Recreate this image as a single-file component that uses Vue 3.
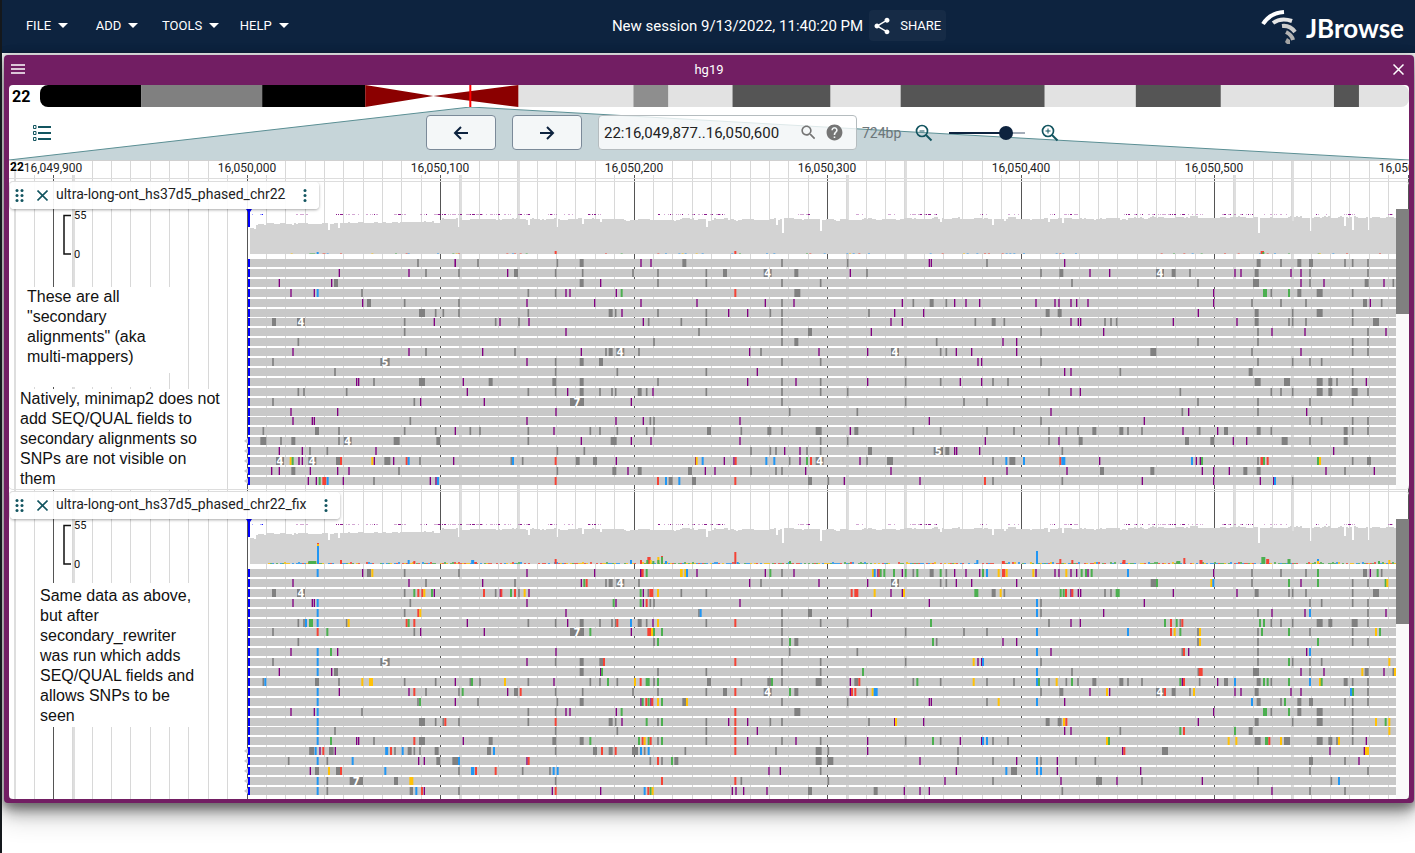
<script setup>
import { ref } from 'vue'

const menus = ['File', 'Add', 'Tools', 'Help']
const locus = ref('22:16,049,877..16,050,600')
const zoom = ref(80)

const ORIGIN = 9
const COLORS = { p: '#800080', g: '#808080', r: '#f44336', b: '#2196f3', n: '#4caf50', y: '#ffc107' }
const WIDTHS = { p: 4, g: 5, r: 6, b: 6, n: 6, y: 6 }
const BLOCK_STARTS = [0, 440, 900]

/* Chromosome bands as [start, end, fill] */
const bands = [
  [0, 101, '#000'], [101, 222, '#808080'], [222, 325, '#000'],
  [478, 593, '#e2e2e2'], [593, 628, '#8e8e8e'], [628, 692, '#e2e2e2'],
  [692, 790, '#555'], [790, 860, '#e2e2e2'], [860, 1004, '#555'],
  [1004, 1095, '#e2e2e2'], [1095, 1180, '#555'], [1180, 1293, '#e2e2e2'],
  [1293, 1318, '#555'], [1318, 1368, '#e2e2e2'],
]

const ticks = Array.from({ length: 8 }, (_, i) => ({
  x: Math.floor(53.5 + i * 193.5) - ORIGIN,
  label: (16049900 + i * 100).toLocaleString('en-US'),
}))
const minor = Array.from({ length: 73 }, (_, i) => Math.floor(14.8 + i * 19.35) - ORIGIN)
const wide = [14, 73, 460, 518, 847, 905, 1234, 1292].map((x) => x - ORIGIN)

/* Tokens: colour letter + centre, optional w(idth), h(eight) and t(ext), in thirds of a pixel per block */
function parse(line) {
  const out = []
  line.split('|').forEach((block, i) => {
    for (const m of block.matchAll(/([pgrbny])(\d+)(?:w(\d+))?(?:h(\d+))?(?:t(\d))?/g)) {
      const w = Number(m[3] || WIDTHS[m[1]]) / 3
      const c = Number(m[2]) / 3 + BLOCK_STARTS[i] - ORIGIN
      out.push({ x: c - w / 2, c, w, h: Number(m[4] || 1), fill: COLORS[m[1]], text: m[5] })
    }
  })
  return out
}

const rowsA = [
  'g1254 p1366|p46 g114 g352 g425w12 p603 p633 g733w12 g1026 g1223|p88 p94 g261 p494 g1076w12 g1143 g1198w12 g1233w12 g1335 g1358 g1404',
  'p1018 p1227 g1278|g57 p203 g228w12 g347 g428 g579 g654 g799 g855w12 g983w24t4 g1069w12 p1231 g1281|g423 g484w12 p570 p629 g780w24t4 g821w12 g870 p1005 p1023 g1070w12 p1173 p1203 g1230 g1404',
  'p838 p995 g1008w12|g425w12 p482 g654 g799 g1026 g1142|g516 g894 g1068w18 p1203 g1230 p1272 g1400w12 p1452 g1480',
  'p873 p943 b953 g1086|g265 g347 p378 p390 p529 n545 r886 g1072w18|p941 n1095w12 g1114 n1167 g1198w12 g1259w18 g1358',
  'p1088 g1107w12 g1214|g57 p261 p464 p603 p771 p976 g1026 p1062|p7 g40 g95w12 g139 p164 p198 p239 p408 p465 p477 p513 p530 p564 p941 g1056 g1143 g1218 g1395w12 p1411 g1445',
  'g1266w18 g1307|g10 g57 g265 g512w12 g527 p546 g654 g799 p866 p923 g991 g1026 g1287 p1364|p71 g443w12 g479w12 p895 g1070w12 g1178 g1259w18 g1358',
  'g822w12 g903w24t4 g1214 p1303|g167 p180 g237 p267 p610 g626 g724 g799 g1026 p1353|p7 g226 g281w12 g313 p513 p535 p542 g615 g633 g650 p820 p1011 g1070w12 g1167 g1178 g1218 g1358 g1428w18',
  'g1214|p378 g777 g1026 g1110w12 p1294|g423 p611 g1074 p1116 p1215 g1404 p1458',
  'g895|g642 g1026 g1069w12|g110 p309 p350 g894 g1074 g1358 g1404',
  'p879 p1227 g1278|p128 g225 p424 g498 g512w12 g541w24t4 g597 p929 g963 p1137 p1283 g1365w24t4|g122 g139 p169 p215 p350 g760w18 g1056 p1203 g1358 g1404',
  'g819 g1155w28t5|p261 g347 g425w12 g483w12 g1026 g1142|g17 p234 p245 g423 g1074 g1178 g1230 g1265',
  'g1005|g347 g532 g799 p952|p494 p513 g661 g1052w12 g1358',
  'p1070 p1076 g1122 g1266w18|p70 g152w12 g343w12 g425w12 g654 p923 g1026 p1068 g1142 p1283|g17 g122 p181 p245 g279 g324 g1073w18 g1161w18 g1259w18 g1291w12 g1311 g1358 p1399',
  'g895 g912 g1040|p82 g265 g347 p383 g425w12 g480 g516 g527 g599w12 g620 p639 g799 g1026 g1142 g1223|g447 p513 p541 g841 g1114 g1143 g1178 g1259w18 g1291w12 g1364w18 g1404',
  'g819 g1243 p1262|p133 g411w42t7 p574 g1026|g17 g192 g261 g894 g1074 g1230 g1358',
  'p873 p1013|p348 g1049 g1252|p453 g847 p866 g1074 p1220',
  'p879 p937 p943 g1231|p261 p528 p610 g631 g642 p900|p88 g423 p733 g1230 g1265 g1358 g1404',
  'g790 g951w12 g1017 g1214 g1307|p46 g91 g120 p342 g265 g451 g480 g532 g620 g642 g807w12 g904 g988w12 g1026 g1136w18 p1231 g1249w12|g40 g122 g261 g342 g447 g499 g534 g583w12 g664w12 g684 g726 p849 g899 p953 g978w12 g1076w12 g1114 g1337w12 g1358 g1404',
  'g790w18 g843 g880w12 g1017 g1043w24t4 g1190w18 g1315w12|g265 p424 g521w18 p574 p633 p900 g1142 g1223|p256 g447 p477 g542w12 g861w12 g937w12 p1000 p1040 g1154w18 g1230 g1337w12',
  'p838 p907 g930 g982 p1128|g352 g433 g933 g991 g1008 p1034 p1080 g1101 g1142 g1290w12|g115w28t5 g142w12 p164 p170 p239 g487 p1301',
  'g840w24t4 y872 n878 p897 p907 g937w24t4 g1014w12 r1023 y1117 p1123 g1162w18 p1181 r1220 b1226 g1260|p41 g214 b219 g248 r347 g413w12 g465w12 p529 p767 y770 b788 p853 p882 r887 b979 b1003 g1049 p1080 n1101 r1113 g1139w24t4 p1260 g1281 g1350w18|g279 b319 g337w18 b372 r481 b490w12 p599 b876 p889 p901 n906 g1074 r1086w9 n1092 r1103 n1254 y1260 g1358 g1407w12',
  'p815 p838 g880w12 p931 p1013 p1047 g1197|g352 g523w12 p564 g599w12 g750w12 p796 p825 g933 g1008 g1026 p1097 p1353|p321 p501 g606w12 g757w12 p907 p941 p988 g1036w12 g1076w12 p1278 g1335 p1423',
  'p925 p949 n959 r973w12 b983 p1030 g1122 p1291 p1308 b1314|r347 r654 b678 g692w12 b718 g762w12 r886 g1110w12 g1165 p1213|p60 r255 g279 g487 p727 p941 p1081 p1121 b1125 g1178',
]

const rowsB = [
  'b953 p1088 g1107w12 y1117 g1214|g57 p261 p464 r606w10 p602 n620 y724w8 y736 b741 p771 p976 n991 g1026 p1062 y1299 b1304 p1314 r1318 n1322 n1333 n1362|p7 n17 g40 n52 g95w12 n122 g139 p164 p198 p239 n249 b261 y296 r311w10 y320 y400 p408 p465 p477 y499 p513 p530 n545 n558 p564 n575 b684 p941 g1056 g1143 g1218 n1254 g1395w12 p1411 n1433 g1445',
  'p879 p1227 g1278|p128 g225 p424 n433 r440 g498 g512w12 g541w24t4 g597 p929 g963 p1137 p1283 g1365w24t4|g122 g139 p169 p215 p350 g762w20 n771 y934 b940 g1056 n1167 p1203 n1254 g1358 g1404 n1457 y1462',
  'g822w12 g903w24t4 g1214 n1243 r1255 r1267 y1273 n1296 p1303|r132 g167 p181 r184 n213 r225 g237 y254 p267 n602 p610 g625 r634w12 y654 g724 g799 g1026 r1235 r1249w12 y1304 p1353|p7 y12 n229w12 g281w12 y302 g313 n482 n491 r498 p513 r517 p535 p542 g615 g633 n653w12 p820 p1011 g1070w12 g1167 g1178 g1218 g1358 g1428w18',
  'p879 p937 p943 b953 g1231|p261 n521 p528 n602 p610 r620 g631 g642 p900|p88 b411 g423 p733 g1230 g1265 g1358 g1404',
  'b953 g1214 r1255 y1261|p378 g777 b782 g1026 g1110w12 p1294|b411 g423 p611 g1074 p1116 p1215 b1230 g1404 p1458',
  'g895 g912 b918 n933w12 b953 g1040 y1046 r1220 n1226 r1243|p82 g265 g347 p383 g425w12 g480 g516 g527 r532 b573 g599w12 g620 p639 y654 g799 r886 g1026 g1142 g1223|n93 g447 p513 p541 n795 r813 n830 g841 r847 n1080 n1092 g1114 g1143 g1178 g1259w18 g1291w12 g1364w18 g1404',
  'g819 r953 n982 g1243 p1262|p133 g411w42t7 n451 p574 r628w12 y636 n642 n666 g1026|g17 g192 g261 b411 b684 r813 y824 n841 g894 y900 g1074 n1086 n1167 g1230 g1358 y1428 n1440',
  'g895|g642 n654 g1026 n1050 g1069w12|n99 g110 p309 p350 g894 y900 g1074 n1254 g1358 g1404',
  'p873 b953 n993 p1013|p348 g1049 g1252|b411 p453 g847 r852 p866 g1074 p1220 b1230',
  'g819 b953 g1155w28t5|p261 g347 g425w12 g484w12 r492 r886 g1026 g1142|g17 y221 p234 p245 b249 g423 g1074 n1167 g1178 g1230 g1265 y1468',
  'p838 b953 p995 g1008w12|g425w12 p482 n486 g654 g799 g1026 g1142 n1269|b411 g516 g895 r902w12 g1068w18 p1203 g1230 p1272 y1387 g1400w12 p1452 g1480 y1485',
  'g790 b796 g951w12 g1017 y1087 y1113w12 g1214 g1307|p46 g91 n96 g120 y195 g265 p342 g451 g480 n504 g532 y585 r602 n623w12 g642 n654 g807w12 g904 g988w12 n996 g1026 g1136w18 p1231 g1249w12 r1258|g40 n52 g122 y221 g261 g342 b411 n417 g447 y470 g499 n516 g534 g583w12 g664w12 g684 g726 n841 p847 r852 g899 p953 g978w12 b1005 g1076w12 n1092 n1103 g1114 n1167 b1230 y1260 n1265 g1337w12 g1358 g1404',
  'b953 p1018 p1227 r1243 g1278|g57 n68 p203 g228w12 r242 g347 g428 g579 g654 g799 g855w12 r886 g983w24t4 n1050 g1069w12 p1231 r1236 r1246 g1281 y1298 b1307w12|g423 g484w12 p570 y621 p629 g780w24t4 r795 g821w12 g870 y882 p1005 p1023 g1070w12 p1173 p1203 b1353 n1359 g1404',
  'b953 g1254 n1260|p46 g114 g352 g425w12 p603 n608 r619 n626 p633 r637 y654 n666 g733w12 y741 g1026 g1223|p88 p94 g261 y296 b411 p494 b1056 g1076w12 g1143 n1155 g1198w12 g1233w12 g1335 g1358 g1404',
  'p873 p943 b953 g1086|g265 g347 p378 p390 p529 n545 r886 g1072w18|p941 n1095w12 g1114 n1167 g1198w12 g1259w18 g1358',
  'b953 g1266w18 g1307|g10 r16 g57 g265 r347 g512w12 g527 p546 n620 g654 n666 g799 p866 r886 p923 g991 g1026 g1287 p1364 y1368|p71 g443w12 g479w12 y492 r499 p895 g1070w12 g1178 g1259w18 g1358 y1428 n1457 y1468',
  'b953 g1005|g347 g532 g799 r886 p952|p494 p513 g661 n841 r852 n1005 g1052w12 g1358 y1468',
  'b953 n993 p1070 p1076 g1122 r1243 g1266w18|p70 g152w12 g343w12 g425w12 n451 n597 r608 y614 n626 r632 g654 n666 g799 r886 p923 g1026 p1068 g1142 p1283|g17 n99 g122 p181 p245 b249 b261 g279 g324 y621 n627 y986 y1009 g1073w18 n1100w10 r1108 y1143 g1161w18 g1259w18 g1291w12 g1311 y1317 g1358 p1399',
  'g935w15 b947 p960 r970 g994w14 p1006 b1160w9 r1173 g1185 b1208 g1229w12 g1243 g1260 g1310w12|g147w12 b162 g347 g465w12 r486 g512w12 r527 g585w18 b603 g614 b626 g736 r886 g1008 g1136w18 g1165 p1283|g174 p668 r673 g795w18 p1290 p1393 y1401w12',
  'g866 b953 g982 b1058 p1256 p1273 g1315w12|g46w18 b57 p261 r266 g631 r654 g666 n696 g709w12 g1136w18 g1171w18|p60 g174 g279 p350 b411 g423 p472 g528 g586 g1233w12 g1335 p1377',
  'p931 g951w12 y987 g1014w12 r1023 b1156|g57 b98w10 r108 r167 g248 g330 b341 b353 p987 p1021 g1142|p169 b319 g342w18 b411 b423 p472 p722 g1074 g1230 g1404',
  'b953 g982 g1069w40t7 g1188w12 y1234w12|g347 r666 r886 g904 g1165|p135 g279 p483 g597w18 p651 g726 p907 g1074 g1294 b1317',
  'b953 g982 g1234w10 b1249 r1266 p1273|g57 p337 r347 p482 b614 r625 n632 y638 p877 p888 p911 p981 g1110w12 g1307w12|p13 p60 p88 g487 p1116 g1230 g1335',
]

const snpsA =
  'y875 n937w18 b953h2 r972w9 b983 r1023 y1117 n1188 r1220 b1226 b1314|n40 y50 r57 r202 b219 r225 r242 n260 r347h3 r498 n545 r655 b678 b718 y728 b737 y770 b788 b877 r886h3 n900 b981 b1003 n1101 r1111 b1154 b1222 y1230 b1241 r1258 b1287|b92 r128 y192 b203 b232 r255 r267 r308 b320 b331 b343 b372 b470 r481 b490 b528 r785 n822 r853 b878 n905 r975 r1016 b1080 r1087w10h3 n1090h2 r1103 b1125 n1167 n1256 y1260 b1300 r1341 r1440'
const snpsB =
  'n937w24h3 r954w6h21 y954w6h20 b954w6h18 r1023h4 b1226h4 r1243h3|b98w9h4 r108h2 r347h5 b573h4 r603h4 r627w10h7 n622h4 y632h4 n640h3 y655h7 n655h4 r666h8 n666h7 b678h3 r886h12 b893h2 n1050h3|b232h4 r310w9h3 b411h13 r481h5 r517h4 r672w9h4 n835w12h3 r853h6 r903w9h4 n1090w12h7 r1103w9h5 n1167w9h5 b1254h5 y1254h3 n1437h3 y1468h4'

function hash(n) {
  const v = Math.sin(n * 12.9898) * 43758.5453
  return v - Math.floor(v)
}

const dips = [
  [328, 8], [338, 6], [459, 9], [528, 7], [556, 9], [582, 6], [600, 4], [707, 9], [776, 7], [782, 15], [821, 13],
  [941, 5], [993, 8], [1004, 4], [1049, 5], [1062, 6], [1258, 17], [1293, 5], [1310, 15], [1345, 10], [1353, 14], [1368, 14],
]
function depthTop(x) {
  if (x < 256) return 44
  if (x < 360) return 40
  if (x < 440) return 39
  if (x < 900) return 36
  return x < 1150 ? 35 : 34
}
const coverage = (() => {
  let d = 'M241 72'
  for (let x = 250; x < 1396; x += 2) {
    let y = depthTop(x) + Math.round(hash(Math.floor(x / 7)) * 2 + hash(x) * 0.8)
    const dip = dips.find((p) => x === p[0] || x === p[0] - 1)
    if (dip) y = depthTop(x) + dip[1]
    d += `V${y}H${x + 2 - ORIGIN}`
  }
  return d + 'V72Z'
})()

const dashes = []
for (let x = 252; x < 1394; x += 2) {
  const dense = hash(Math.floor(x / 14) + 5) > 0.35
  if (dense && hash(x + 3) > 0.4) {
    dashes.push({ x: x - ORIGIN, w: hash(x + 9) > 0.6 ? 2 : 1, o: hash(x + 1) > 0.7 ? 0.9 : 0.35, fill: x < 265 ? '#00f' : '#800080' })
  }
}

const noise = []
for (let x = 266; x < 1396; x += 2) {
  if (hash(x * 3) > 0.25) {
    const h = hash(x + 77) > 0.8 ? 2 : 1
    noise.push({ x: x - ORIGIN, w: 2, h, fill: [COLORS.r, COLORS.b, COLORS.n, COLORS.y][Math.floor(hash(x * 7) * 4)] })
  }
}

const makeRows = (lines) => lines.map((line, i) => ({ y: 77 + Math.round(i * 9.9), marks: parse(line), clipped: i > 17 }))

const tracks = [
  { name: 'ultra-long-ont_hs37d5_phased_chr22', rows: makeRows(rowsA), snps: parse(snpsA), noise: [] },
  { name: 'ultra-long-ont_hs37d5_phased_chr22_fix', rows: makeRows(rowsB), snps: parse(snpsB), noise },
]
</script>

<template>
  <div class="app">
    <header class="topbar">
      <nav class="menus">
        <button v-for="m in menus" :key="m" class="menu">
          {{ m }}
          <svg width="10" height="5" viewBox="0 0 10 5"><path d="M0 0h10L5 5z" fill="#fff" /></svg>
        </button>
      </nav>
      <div class="session">
        <span class="session-name">New session 9/13/2022, 11:40:20 PM</span>
        <button class="share">
          <svg width="20" height="20" viewBox="0 0 24 24"><path fill="#fff" d="M18 16.08c-.76 0-1.44.3-1.96.77L8.91 12.7c.05-.23.09-.46.09-.7s-.04-.47-.09-.7l7.05-4.11c.54.5 1.25.81 2.04.81 1.66 0 3-1.34 3-3s-1.34-3-3-3-3 1.34-3 3c0 .24.04.47.09.7L8.04 9.81C7.5 9.31 6.79 9 6 9c-1.66 0-3 1.34-3 3s1.34 3 3 3c.79 0 1.5-.31 2.04-.81l7.12 4.16c-.05.21-.08.43-.08.65 0 1.61 1.31 2.92 2.92 2.92s2.92-1.31 2.92-2.92-1.31-2.92-2.92-2.92z" /></svg>
          Share
        </button>
      </div>
      <div class="brand">
        <svg width="36" height="38" viewBox="0 0 36 38" fill="none">
          <path d="M2 17Q9 6 23 5" stroke="#fff" stroke-width="4" />
          <path d="M12 16Q20 10 31 14" stroke="#e6e6e6" stroke-width="4" />
          <path d="M21 19Q29 18 34 25" stroke="#ccc" stroke-width="4" />
          <path d="M25 25Q31 28 32 33" stroke="#b3b3b3" stroke-width="4" />
          <path d="M26 31l3 2 0 4h-3l-2-2z" fill="#a3a3a3" />
        </svg>
        <span class="brand-name">JBrowse</span>
      </div>
    </header>

    <main class="workspace">
      <section class="view">
        <div class="titlebar">
          <button class="icon-btn" aria-label="View menu">
            <svg width="14" height="12" viewBox="0 0 14 12"><path d="M0 2h14M0 6h14M0 10h14" stroke="#fff" stroke-width="1.4" /></svg>
          </button>
          <h1>hg19</h1>
          <button class="icon-btn" aria-label="Close view">
            <svg width="11" height="11" viewBox="0 0 11 11"><path d="M.5.5l10 10M10.5.5l-10 10" stroke="#fff" stroke-width="1.5" /></svg>
          </button>
        </div>

        <div class="body">
          <div class="overview">
            <strong>22</strong>
            <svg class="ideogram" viewBox="0 0 1368 22" preserveAspectRatio="none">
              <rect v-for="b in bands" :key="b[0]" :x="b[0]" y="0" :width="b[1] - b[0]" height="22" :fill="b[2]" />
              <path d="M325 0L393 11L325 22zM478 0L393 11L478 22z" fill="#8b0000" />
              <rect x="429" y="0" width="2" height="22" fill="red" />
            </svg>
          </div>

          <div class="controls">
            <svg class="zoom-area" viewBox="0 0 1399 53" preserveAspectRatio="none">
              <path d="M0 53L461 0L1399 53z" fill="#c6d5d9" />
              <path d="M0 53L461 0L1399 53" fill="none" stroke="#5b8f94" vector-effect="non-scaling-stroke" />
            </svg>
            <button class="icon-btn selector" aria-label="Open track selector">
              <svg width="18" height="16" viewBox="0 0 18 16" fill="none" stroke="#135560">
                <path d="M5 2h13M5 8h13M5 14h13" stroke-width="2" />
                <path d="M.5.5h2.500v3H.5zM.5 6.500h2.500v3H.5zM.5 12.500h2.500v3H.5z" />
              </svg>
            </button>
            <button class="pan" aria-label="Pan left">
              <svg width="16" height="14" viewBox="0 0 16 14" fill="none" stroke="#0d233f" stroke-width="2"><path d="M15 7H2M8 1L2 7l6 6" /></svg>
            </button>
            <button class="pan" aria-label="Pan right">
              <svg width="16" height="14" viewBox="0 0 16 14" fill="none" stroke="#0d233f" stroke-width="2"><path d="M1 7h13M8 1l6 6-6 6" /></svg>
            </button>
            <div class="search">
              <input v-model="locus" type="text" aria-label="Location" />
              <svg width="19" height="19" viewBox="0 0 24 24"><path fill="#757575" d="M15.500 14h-.79l-.28-.27C15.410 12.590 16 11.110 16 9.500 16 5.910 13.090 3 9.500 3S3 5.910 3 9.500 5.910 16 9.500 16c1.610 0 3.090-.59 4.230-1.570l.27.28v.79l5 4.990L20.490 19l-4.990-5zm-6 0C7.010 14 5 11.990 5 9.500S7.010 5 9.500 5 14 7.010 14 9.500 11.990 14 9.500 14z" /></svg>
              <button class="icon-btn" aria-label="Help">
                <svg width="19" height="19" viewBox="0 0 24 24"><path fill="#757575" d="M12 2C6.480 2 2 6.480 2 12s4.480 10 10 10 10-4.480 10-10S17.520 2 12 2zm1 17h-2v-2h2v2zm2.070-7.750l-.9.92C13.450 12.900 13 13.500 13 15h-2v-.5c0-1.100.45-2.100 1.170-2.830l1.240-1.260c.37-.36.59-.86.59-1.410 0-1.100-.9-2-2-2s-2 .9-2 2H8c0-2.210 1.790-4 4-4s4 1.790 4 4c0 .88-.36 1.680-.93 2.250z" /></svg>
              </button>
            </div>
            <span class="span-size">724bp</span>
            <button class="icon-btn" aria-label="Zoom out">
              <svg width="18" height="18" viewBox="0 0 18 18" fill="none" stroke="#135560"><circle cx="7" cy="7" r="5.500" stroke-width="1.700" /><path d="M11 11l5.500 5.500" stroke-width="2" /><path d="M4.500 7h5" /></svg>
            </button>
            <input v-model="zoom" class="slider" type="range" min="0" max="100" aria-label="Zoom level" :style="{ '--fill': zoom + '%' }" />
            <button class="icon-btn" aria-label="Zoom in">
              <svg width="18" height="18" viewBox="0 0 18 18" fill="none" stroke="#135560"><circle cx="7" cy="7" r="5.500" stroke-width="1.700" /><path d="M11 11l5.500 5.500" stroke-width="2" /><path d="M4.500 7h5M7 4.500v5" /></svg>
            </button>
          </div>

          <div class="plot">
            <svg class="grid" width="100%" height="100%">
              <rect v-for="x in minor" :key="x" :x="x" y="0" width="1" height="100%" fill="#d8d8d8" />
              <rect v-for="x in wide" :key="'w' + x" :x="x" y="0" width="2" height="100%" fill="#dedede" />
              <rect v-for="t in ticks" :key="t.x" :x="t.x" y="0" width="1" height="100%" fill="#555" />
            </svg>

            <div class="ruler">
              <strong>22</strong>
              <span v-for="t in ticks" :key="t.x" :style="{ left: t.x + 'px' }">{{ t.label }}</span>
            </div>

            <article v-for="t in tracks" :key="t.name" class="track">
              <div class="track-label">
                <button class="icon-btn" aria-label="Move track">
                  <svg width="9" height="13" viewBox="0 0 9 13" fill="#135560"><circle v-for="i in 6" :key="i" :cx="i % 2 ? 2 : 7" :cy="1.500 + 5 * Math.floor((i - 1) / 2)" r="1.500" /></svg>
                </button>
                <button class="icon-btn" aria-label="Close track">
                  <svg width="11" height="11" viewBox="0 0 11 11"><path d="M.5.5l10 10M10.500.5l-10 10" stroke="#135560" stroke-width="1.600" /></svg>
                </button>
                <span>{{ t.name }}</span>
                <button class="icon-btn" aria-label="Track menu">
                  <svg width="4" height="13" viewBox="0 0 4 13" fill="#135560"><circle cx="2" cy="1.500" r="1.500" /><circle cx="2" cy="6.500" r="1.500" /><circle cx="2" cy="11.500" r="1.500" /></svg>
                </button>
              </div>
              <svg class="pileup" width="100%" height="307">
                <path d="M62 33.500h-7v38.500h7" fill="none" stroke="#111" stroke-width="1.500" />
                <text class="axis" x="65" y="37">55</text>
                <text class="axis" x="65" y="76">0</text>
                <rect v-for="(d, i) in dashes" :key="'d' + i" :x="d.x" y="32" :width="d.w" height="1" :fill="d.fill" :fill-opacity="d.o" />
                <path :d="coverage" fill="#d3d3d3" />
                <rect v-for="(s, i) in t.noise" :key="'n' + i" :x="s.x" :y="72 - s.h" :width="s.w" :height="s.h" :fill="s.fill" fill-opacity=".8" />
                <rect v-for="(s, i) in t.snps" :key="'s' + i" :x="s.x" :y="72 - s.h" :width="s.w" :height="s.h" :fill="s.fill" :fill-opacity="s.h === 1 ? 0.5 : 1" />
                <path d="M237 27h6l-2 3v15h-2V30z" fill="#00f" />
                <g v-for="r in t.rows" :key="r.y">
                  <path v-if="r.clipped" :d="`M239 ${r.y + 1}l-4 3l4 3z`" fill="#c8c8c8" />
                  <rect x="240" :y="r.y" width="1147" height="8" fill="#c8c8c8" />
                  <rect x="239" :y="r.y" width="2" height="8" fill="#00f" />
                  <template v-for="(m, i) in r.marks" :key="i">
                    <rect :x="m.x" :y="r.y" :width="m.w" height="8" :fill="m.fill" />
                    <text v-if="m.text" class="len" :x="m.c" :y="r.y + 8">{{ m.text }}</text>
                  </template>
                </g>
              </svg>
              <div class="scrollbar"><i></i></div>
            </article>

            <p class="note note-a">These are all<br />"secondary<br />alignments" (aka<br />multi-mappers)</p>
            <p class="note note-b">Natively, minimap2 does not<br />add SEQ/QUAL fields to<br />secondary alignments so<br />SNPs are not visible on<br />them</p>
            <p class="note note-c">Same data as above,<br />but after<br />secondary_rewriter<br />was run which adds<br />SEQ/QUAL fields and<br />allows SNPs to be<br />seen</p>
          </div>
        </div>
      </section>
    </main>
  </div>
</template>

<style>
body {
  margin: 0;
  background: #fff;
}
</style>

<style scoped>
.app {
  min-height: 100vh;
  box-sizing: border-box;
  border-left: 2px solid #14181c;
  font-family: Roboto, "Liberation Sans", sans-serif;
  color: #222;
  overflow: hidden;
}
button {
  font: inherit;
  color: inherit;
  border: 0;
  background: none;
  padding: 0;
  cursor: pointer;
}
svg {
  display: block;
  flex: none;
}
.icon-btn {
  display: flex;
}
.topbar {
  display: flex;
  align-items: center;
  justify-content: space-between;
  height: 53px;
  box-sizing: border-box;
  padding: 0 11px 2px 12px;
  background: #0d233f;
  color: #fff;
}
.menus {
  display: flex;
  gap: 4px;
}
.menu {
  display: flex;
  align-items: center;
  justify-content: center;
  gap: 7px;
  min-width: 66px;
  padding: 0 8px;
  font-size: 12px;
  text-transform: uppercase;
}
.session {
  display: flex;
  align-items: center;
  gap: 6px;
}
.session-name {
  font-size: 15px;
}
.share {
  display: flex;
  align-items: center;
  gap: 8px;
  height: 31px;
  padding: 0 5px 0 3px;
  border-radius: 4px;
  background: #162b46;
  font-size: 13px;
  text-transform: uppercase;
}
.menu {
  font-size: 13px;
}
.brand {
  display: flex;
  align-items: center;
  gap: 9px;
}
.brand-name {
  padding-top: 4px;
  font: 700 26px/36px Lato, sans-serif;
}
.workspace {
  padding: 2px 1px 50px 2px;
  background: #fff;
}
.view {
  background: #721e63;
  border-radius: 4px;
  padding: 0 5px 4px;
  box-shadow: 0 12px 14px -2px rgba(0, 0, 0, 0.28), 0 14px 26px 2px rgba(0, 0, 0, 0.16), 0 2px 8px 3px rgba(0, 0, 0, 0.32);
}
.titlebar {
  display: flex;
  align-items: center;
  justify-content: space-between;
  height: 30px;
  box-sizing: border-box;
  padding: 0 5px 2px 2px;
  color: #fff;
}
.titlebar h1 {
  margin: 0;
  font-size: 13px;
  font-weight: 400;
}
.body {
  background: #fff;
  border-radius: 4px;
  overflow: hidden;
}
.overview {
  display: flex;
  align-items: center;
  height: 22px;
}
.overview strong {
  width: 28px;
  padding-left: 3px;
  font-size: 16px;
  font-weight: 700;
  color: #000;
}
.ideogram {
  flex: 1;
  min-width: 0;
  height: 22px;
  border-radius: 8px;
}
.controls {
  position: relative;
  display: flex;
  align-items: center;
  height: 53px;
  box-sizing: border-box;
  padding-bottom: 2px;
}
.controls > * {
  position: relative;
}
.controls > .zoom-area {
  position: absolute;
  inset: 0;
  width: 100%;
  height: 53px;
}
.selector {
  margin: 0 375px 0 24px;
}
.pan {
  display: flex;
  align-items: center;
  justify-content: center;
  width: 70px;
  height: 35px;
  margin-right: 16px;
  border: 1px solid #7b8a99;
  border-radius: 4px;
  background: rgba(255, 255, 255, 0.8);
}
.search {
  display: flex;
  align-items: center;
  gap: 7px;
  width: 259px;
  height: 35px;
  box-sizing: border-box;
  padding: 0 12px 0 5px;
  border: 1px solid #b5bcbf;
  border-radius: 4px;
  background: rgba(255, 255, 255, 0.8);
}
.search input {
  flex: 1;
  min-width: 0;
  padding: 0;
  border: 0;
  outline: 0;
  background: none;
  font: 15px Roboto, sans-serif;
  color: #222;
}
.span-size {
  margin: 0 14px 0 5px;
  font-size: 14px;
  color: #6d7679;
}
.slider {
  appearance: none;
  width: 76px;
  height: 14px;
  margin: 0 16px;
  background: linear-gradient(90deg, #0d233f var(--fill), #a4adb9 var(--fill)) center / 100% 2px no-repeat;
}
.slider::-webkit-slider-thumb {
  appearance: none;
  width: 14px;
  height: 14px;
  border-radius: 50%;
  background: #0d233f;
}
.plot {
  position: relative;
  height: 639px;
  overflow: hidden;
  border-top: 1px solid #d0d0d0;
  box-sizing: border-box;
}
.grid {
  position: absolute;
  inset: 0;
}
.ruler {
  position: relative;
  height: 17px;
  border-bottom: 1px solid #ddd;
  margin-bottom: 3px;
  font-size: 12px;
  line-height: 14px;
}
.ruler strong {
  position: absolute;
  left: 1px;
  z-index: 1;
  line-height: 12px;
  color: #000;
}
.ruler span {
  position: absolute;
  transform: translateX(-50%);
  background: #fff;
}
.track {
  position: relative;
  height: 307px;
  margin-bottom: 3px;
  border-radius: 4px;
  box-shadow: 0 0 0 1px #ddd;
  overflow: hidden;
}
.track-label {
  position: absolute;
  z-index: 1;
  left: 1px;
  top: 0;
  display: flex;
  align-items: center;
  height: 27px;
  padding: 0 12px 0 5px;
  border-radius: 4px;
  background: rgba(255, 255, 255, 0.92);
  box-shadow: 0 1px 3px rgba(0, 0, 0, 0.35);
  font-size: 14px;
}
.track-label span {
  margin: 0 18px 3px 8px;
}
.track-label .icon-btn + .icon-btn {
  margin-left: 13px;
}
.pileup {
  position: relative;
}
.axis {
  font: 11px Roboto, sans-serif;
  fill: #111;
}
.len {
  font: 700 10px "DejaVu Sans", sans-serif;
  fill: #fff;
  text-anchor: middle;
}
.scrollbar {
  position: absolute;
  right: 0;
  top: 27px;
  bottom: 0;
  width: 13px;
  background: #fafafa;
}
.scrollbar i {
  display: block;
  height: 105px;
  background: #808080;
}
.note {
  position: absolute;
  margin: 0;
  background: #fff;
  font: 16px/20px "Liberation Sans", sans-serif;
  color: #111;
  white-space: nowrap;
}
.note-a {
  left: 10px;
  top: 126px;
  width: 160px;
  height: 86px;
  padding-left: 8px;
}
.note-a::after {
  content: "";
  position: absolute;
  left: 0;
  top: 100%;
  width: 148px;
  height: 14px;
  background: #fff;
}
.note-b {
  left: 11px;
  top: 228px;
  width: 202px;
}
.note-c {
  left: 29px;
  top: 422px;
  padding: 3px 10px 1px 2px;
}
</style>
